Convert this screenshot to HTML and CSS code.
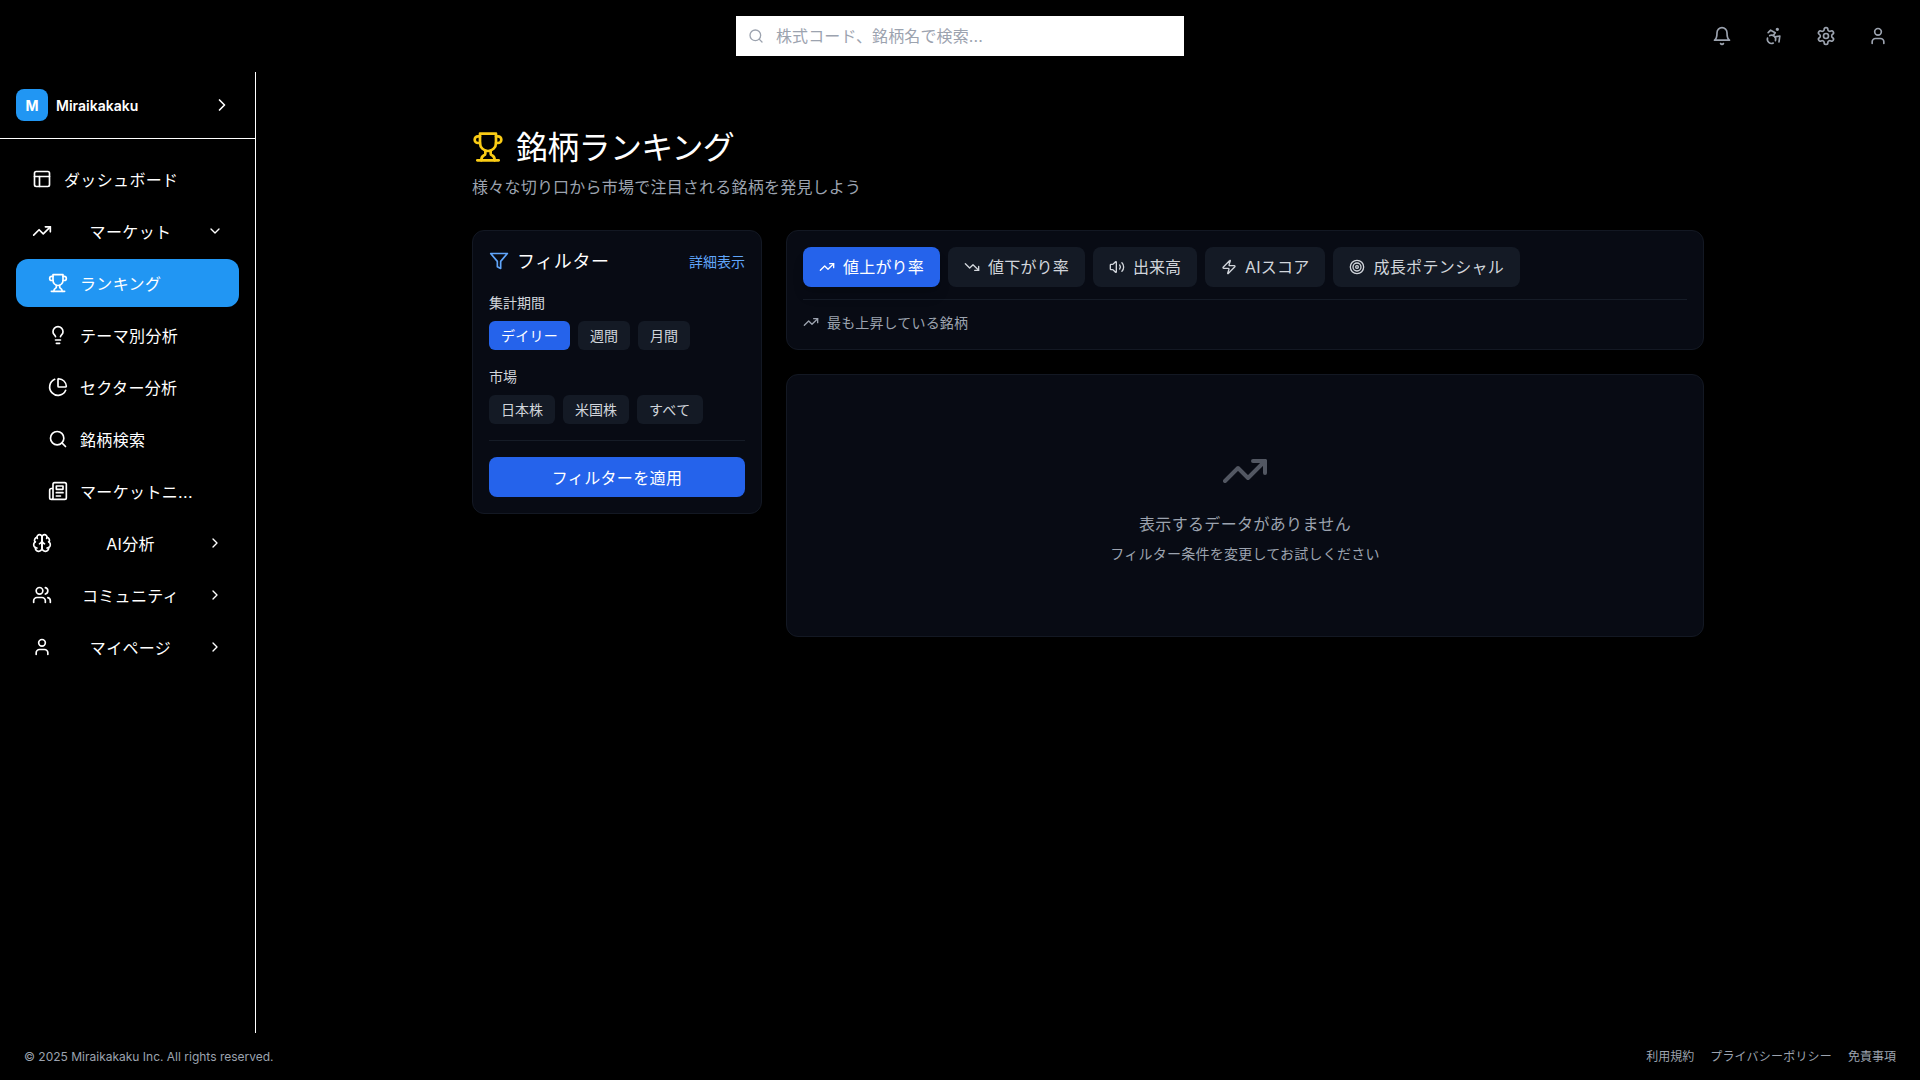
FILE: index.html
```html
<!DOCTYPE html>
<html lang="ja">
<head>
<meta charset="utf-8">
<title>銘柄ランキング | Miraikakaku</title>
<link rel="stylesheet" href="styles.css">
</head>
<body>
<svg class="sprite" aria-hidden="true">
  <symbol id="search" viewBox="0 0 24 24"><circle cx="11" cy="11" r="8"/><path d="m21 21-4.3-4.3"/></symbol>
  <symbol id="bell" viewBox="0 0 24 24"><path d="M6 8a6 6 0 0 1 12 0c0 7 3 9 3 9H3s3-2 3-9"/><path d="M10.3 21a1.94 1.94 0 0 0 3.4 0"/></symbol>
  <symbol id="accessibility" viewBox="0 0 24 24"><circle cx="16" cy="4" r="1"/><path d="m18 19 1-7-6 1"/><path d="m5 8 3-3 5.5 3-2.36 3.5"/><path d="M4.24 14.5a5 5 0 0 0 6.88 6"/><path d="M13.76 17.5a5 5 0 0 0-6.88-6"/></symbol>
  <symbol id="settings" viewBox="0 0 24 24"><path d="M12.22 2h-.44a2 2 0 0 0-2 2v.18a2 2 0 0 1-1 1.73l-.43.25a2 2 0 0 1-2 0l-.15-.08a2 2 0 0 0-2.73.73l-.22.38a2 2 0 0 0 .73 2.73l.15.1a2 2 0 0 1 1 1.72v.51a2 2 0 0 1-1 1.74l-.15.09a2 2 0 0 0-.73 2.73l.22.38a2 2 0 0 0 2.73.73l.15-.08a2 2 0 0 1 2 0l.43.25a2 2 0 0 1 1 1.73V20a2 2 0 0 0 2 2h.44a2 2 0 0 0 2-2v-.18a2 2 0 0 1 1-1.73l.43-.25a2 2 0 0 1 2 0l.15.08a2 2 0 0 0 2.73-.73l.22-.39a2 2 0 0 0-.73-2.73l-.15-.08a2 2 0 0 1-1-1.74v-.5a2 2 0 0 1 1-1.74l.15-.09a2 2 0 0 0 .73-2.73l-.22-.38a2 2 0 0 0-2.73-.73l-.15.08a2 2 0 0 1-2 0l-.43-.25a2 2 0 0 1-1-1.73V4a2 2 0 0 0-2-2z"/><circle cx="12" cy="12" r="3"/></symbol>
  <symbol id="user" viewBox="0 0 24 24"><path d="M19 21v-2a4 4 0 0 0-4-4H9a4 4 0 0 0-4 4v2"/><circle cx="12" cy="7" r="4"/></symbol>
  <symbol id="users" viewBox="0 0 24 24"><path d="M16 21v-2a4 4 0 0 0-4-4H6a4 4 0 0 0-4 4v2"/><circle cx="9" cy="7" r="4"/><path d="M22 21v-2a4 4 0 0 0-3-3.87"/><path d="M16 3.13a4 4 0 0 1 0 7.75"/></symbol>
  <symbol id="chevron-right" viewBox="0 0 24 24"><path d="m9 18 6-6-6-6"/></symbol>
  <symbol id="chevron-down" viewBox="0 0 24 24"><path d="m6 9 6 6 6-6"/></symbol>
  <symbol id="dashboard" viewBox="0 0 24 24"><rect x="3" y="3" width="18" height="18" rx="2"/><path d="M3 9h18"/><path d="M9 21V9"/></symbol>
  <symbol id="trend-up" viewBox="0 0 24 24"><path d="m22 7-8.5 8.5-5-5L2 17"/><path d="M16 7h6v6"/></symbol>
  <symbol id="trend-down" viewBox="0 0 24 24"><path d="m22 17-8.5-8.5-5 5L2 7"/><path d="M16 17h6v-6"/></symbol>
  <symbol id="trophy" viewBox="0 0 24 24"><path d="M6 9H4.5a2.5 2.5 0 0 1 0-5H6"/><path d="M18 9h1.5a2.5 2.5 0 0 0 0-5H18"/><path d="M4 22h16"/><path d="M10 14.66V17c0 .55-.47.98-.97 1.21C7.85 18.75 7 20.24 7 22"/><path d="M14 14.66V17c0 .55.47.98.97 1.21C16.15 18.75 17 20.24 17 22"/><path d="M18 2H6v7a6 6 0 0 0 12 0V2Z"/></symbol>
  <symbol id="bulb" viewBox="0 0 24 24"><path d="M15 14c.2-1 .7-1.7 1.5-2.5 1-.9 1.5-2.2 1.5-3.5A6 6 0 0 0 6 8c0 1 .2 2.2 1.5 3.5.7.7 1.3 1.5 1.5 2.5"/><path d="M9 18h6"/><path d="M10 22h4"/></symbol>
  <symbol id="pie" viewBox="0 0 24 24"><path d="M21 12c.552 0 1.005-.449.95-.998a10 10 0 0 0-8.953-8.951c-.55-.055-.998.398-.998.95v8a1 1 0 0 0 1 1z"/><path d="M21.21 15.89A10 10 0 1 1 8 2.83"/></symbol>
  <symbol id="news" viewBox="0 0 24 24"><path d="M4 22h16a2 2 0 0 0 2-2V4a2 2 0 0 0-2-2H8a2 2 0 0 0-2 2v16a2 2 0 0 1-2 2Zm0 0a2 2 0 0 1-2-2v-9c0-1.1.9-2 2-2h2"/><path d="M18 14h-8"/><path d="M15 18h-5"/><path d="M10 6h8v4h-8V6Z"/></symbol>
  <symbol id="brain" viewBox="0 0 24 24"><path d="M12 5a3 3 0 1 0-5.997.125 4 4 0 0 0-2.526 5.77 4 4 0 0 0 .556 6.588A4 4 0 1 0 12 18Z"/><path d="M12 5a3 3 0 1 1 5.997.125 4 4 0 0 1 2.526 5.77 4 4 0 0 1-.556 6.588A4 4 0 1 1 12 18Z"/><path d="M15 13a4.5 4.5 0 0 1-3-4 4.5 4.5 0 0 1-3 4"/><path d="M17.599 6.5a3 3 0 0 0 .399-1.375"/><path d="M6.003 5.125A3 3 0 0 0 6.401 6.5"/><path d="M3.477 10.896a4 4 0 0 1 .585-.396"/><path d="M19.938 10.5a4 4 0 0 1 .585.396"/><path d="M6 18a4 4 0 0 1-1.967-.516"/><path d="M19.967 17.484A4 4 0 0 1 18 18"/></symbol>
  <symbol id="filter" viewBox="0 0 24 24"><path d="M22 3H2l8 9.46V19l4 2v-8.54L22 3z"/></symbol>
  <symbol id="volume" viewBox="0 0 24 24"><path d="M11 4.702a.705.705 0 0 0-1.203-.498L6.413 7.587A1.4 1.4 0 0 1 5.416 8H3a1 1 0 0 0-1 1v6a1 1 0 0 0 1 1h2.416a1.4 1.4 0 0 1 .997.413l3.383 3.384A.705.705 0 0 0 11 19.298z"/><path d="M16 9a5 5 0 0 1 0 6"/><path d="M19.364 18.364a9 9 0 0 0 0-12.728"/></symbol>
  <symbol id="zap" viewBox="0 0 24 24"><path d="M4 14a1 1 0 0 1-.78-1.63l9.9-10.2a.5.5 0 0 1 .86.46l-1.92 6.02A1 1 0 0 0 13 10h7a1 1 0 0 1 .78 1.63l-9.9 10.2a.5.5 0 0 1-.86-.46l1.92-6.02A1 1 0 0 0 11 14z"/></symbol>
  <symbol id="target" viewBox="0 0 24 24"><circle cx="12" cy="12" r="10"/><circle cx="12" cy="12" r="6"/><circle cx="12" cy="12" r="2"/></symbol>
</svg>

<div class="app">
  <header class="topbar">
    <div class="search">
      <svg class="icon icon-sm"><use href="#search"/></svg>
      <span>株式コード、銘柄名で検索...</span>
    </div>
    <div class="top-actions">
      <svg class="icon"><use href="#bell"/></svg>
      <svg class="icon"><use href="#accessibility"/></svg>
      <svg class="icon"><use href="#settings"/></svg>
      <svg class="icon"><use href="#user"/></svg>
    </div>
  </header>

  <div class="body">
    <aside class="sidebar">
      <div class="brand">
        <div class="logo">M</div>
        <span class="brand-name">Miraikakaku</span>
        <svg class="icon"><use href="#chevron-right"/></svg>
      </div>
      <nav class="nav">
        <a class="nav-item"><svg class="icon"><use href="#dashboard"/></svg><span>ダッシュボード</span></a>
        <a class="nav-item group"><svg class="icon"><use href="#trend-up"/></svg><span>マーケット</span><svg class="icon icon-sm"><use href="#chevron-down"/></svg></a>
        <a class="nav-item sub active"><svg class="icon"><use href="#trophy"/></svg><span>ランキング</span></a>
        <a class="nav-item sub"><svg class="icon"><use href="#bulb"/></svg><span>テーマ別分析</span></a>
        <a class="nav-item sub"><svg class="icon"><use href="#pie"/></svg><span>セクター分析</span></a>
        <a class="nav-item sub"><svg class="icon"><use href="#search"/></svg><span>銘柄検索</span></a>
        <a class="nav-item sub"><svg class="icon"><use href="#news"/></svg><span>マーケットニ...</span></a>
        <a class="nav-item group"><svg class="icon"><use href="#brain"/></svg><span>AI分析</span><svg class="icon icon-sm"><use href="#chevron-right"/></svg></a>
        <a class="nav-item group"><svg class="icon"><use href="#users"/></svg><span>コミュニティ</span><svg class="icon icon-sm"><use href="#chevron-right"/></svg></a>
        <a class="nav-item group"><svg class="icon"><use href="#user"/></svg><span>マイページ</span><svg class="icon icon-sm"><use href="#chevron-right"/></svg></a>
      </nav>
    </aside>

    <main class="main">
      <h1 class="title"><svg class="icon icon-lg"><use href="#trophy"/></svg><span>銘柄ランキング</span></h1>
      <p class="subtitle">様々な切り口から市場で注目される銘柄を発見しよう</p>

      <div class="grid">
        <section class="card filters">
          <div class="filters-head">
            <h2><svg class="icon"><use href="#filter"/></svg><span>フィルター</span></h2>
            <a class="link">詳細表示</a>
          </div>
          <div class="field">
            <div class="label">集計期間</div>
            <div class="chips"><button class="chip on">デイリー</button><button class="chip">週間</button><button class="chip">月間</button></div>
          </div>
          <div class="field">
            <div class="label">市場</div>
            <div class="chips"><button class="chip">日本株</button><button class="chip">米国株</button><button class="chip kana">すべて</button></div>
          </div>
          <div class="apply-row"><button class="apply">フィルターを適用</button></div>
        </section>

        <div class="results">
          <section class="card tabs-card">
            <div class="tabs">
              <button class="tab on"><svg class="icon icon-sm"><use href="#trend-up"/></svg>値上がり率</button>
              <button class="tab"><svg class="icon icon-sm"><use href="#trend-down"/></svg>値下がり率</button>
              <button class="tab kanji"><svg class="icon icon-sm"><use href="#volume"/></svg>出来高</button>
              <button class="tab"><svg class="icon icon-sm"><use href="#zap"/></svg>AIスコア</button>
              <button class="tab kana"><svg class="icon icon-sm"><use href="#target"/></svg>成長ポテンシャル</button>
            </div>
            <div class="tab-note"><svg class="icon icon-sm"><use href="#trend-up"/></svg><span>最も上昇している銘柄</span></div>
          </section>
          <section class="card empty">
            <svg class="icon icon-xl"><use href="#trend-up"/></svg>
            <p class="empty-title">表示するデータがありません</p>
            <p class="empty-text">フィルター条件を変更してお試しください</p>
          </section>
        </div>
      </div>
    </main>
  </div>

  <footer class="footer">
    <span>© 2025 Miraikakaku Inc. All rights reserved.</span>
    <div class="footer-links"><a>利用規約</a><a class="kana">プライバシーポリシー</a><a>免責事項</a></div>
  </footer>
</div>
</body>
</html>
```
FILE: styles.css
```css
* { box-sizing: border-box; margin: 0; padding: 0; }
body { background: #000; color: #fff; font-family: Inter, "Noto Sans CJK JP", sans-serif; font-size: 16px; line-height: 24px; }
button { font: inherit; color: inherit; border: 0; }
.sprite { position: absolute; width: 0; height: 0; }
.icon { width: 20px; height: 20px; flex: none; fill: none; stroke: currentColor; stroke-width: 2; stroke-linecap: round; stroke-linejoin: round; }
.icon-sm { width: 16px; height: 16px; }
.icon-lg { width: 32px; height: 32px; }
.icon-xl { width: 48px; height: 48px; }

.app { height: 1080px; display: flex; flex-direction: column; overflow: hidden; }

.topbar { height: 72px; flex: none; display: grid; grid-template-columns: 1fr 448px 1fr; align-items: center; padding: 0 32px; color: #9ca3af; }
.search { grid-column: 2; height: 40px; background: #fff; display: flex; align-items: center; gap: 12px; padding: 0 12px; letter-spacing: 0.12px; }
.top-actions { display: flex; justify-content: flex-end; align-items: center; gap: 32px; }

.body { flex: 1; display: flex; min-height: 0; }
.sidebar { width: 256px; flex: none; border-right: 1px solid #fff; }
.brand { height: 67px; display: flex; align-items: center; padding: 0 23px 0 16px; border-bottom: 1px solid #fff; }
.logo { width: 32px; height: 32px; border-radius: 8px; background: #2196f3; display: flex; align-items: center; justify-content: center; font-size: 14px; font-weight: 700; margin-right: 8px; padding-top: 1px; }
.brand-name { font-size: 14px; font-weight: 600; flex: 1; padding-top: 1px; }
.nav { padding: 16px; display: flex; flex-direction: column; gap: 4px; letter-spacing: 0.35px; }
.nav-item { height: 48px; border-radius: 12px; display: flex; align-items: center; gap: 12px; padding: 0 16px; }
.nav-item span { white-space: nowrap; padding-top: 1px; }
.nav-item.group span { flex: 1; text-align: center; padding-left: 2px; }
.nav-item.sub { padding-left: 32px; }
.nav-item.active { background: #2196f3; }

.main { width: 1280px; margin: 0 auto; padding: 56px 24px 0; }
.title { display: flex; align-items: center; gap: 12px; height: 40px; font-size: 32px; line-height: 40px; font-weight: 400; letter-spacing: -0.7px; }
.title .icon { color: #facc15; margin-top: -2px; }
.subtitle { color: #9ca3af; margin-top: 7px; letter-spacing: 0.22px; }
.grid { display: grid; grid-template-columns: 290px 1fr; gap: 24px; align-items: start; margin-top: 31px; }
.card { background: #080b14; border: 1px solid #131823; border-radius: 12px; padding: 16px; }

.filters { height: 284px; }
.filters-head { display: flex; align-items: center; justify-content: space-between; height: 28px; margin-bottom: 18px; }
.filters-head h2 { display: flex; align-items: center; gap: 8px; font-size: 18px; font-weight: 400; letter-spacing: 0.6px; }
.filters-head span, .link { padding-top: 2px; }
.filters-head .icon, .link { color: #60a5fa; }
.link { font-size: 14px; }
.field { margin-bottom: 17px; }
.field + .field { margin-bottom: 16px; }
.label { font-size: 14px; line-height: 20px; color: #d1d5db; margin-bottom: 8px; }
.chips { display: flex; gap: 8px; }
.chip { height: 29px; padding: 1px 12px 0; border-radius: 6px; background: #141a25; color: #d1d5db; font-size: 14px; line-height: 28px; }
.chip.on { letter-spacing: 0.25px; }
.chip.on, .tab.on { background: #2563eb; color: #fff; }
.apply-row { border-top: 1px solid #161c27; padding-top: 16px; }
.apply { width: 100%; height: 40px; border-radius: 8px; background: #2563eb; letter-spacing: 0.35px; padding-top: 1px; }

.results { display: flex; flex-direction: column; gap: 24px; }
.tabs-card { height: 120px; }
.tabs { display: flex; gap: 8px; }
.tab { height: 40px; padding: 0 16px; border-radius: 8px; background: #141a25; color: #d1d5db; display: flex; align-items: center; gap: 8px; letter-spacing: 0.2px; }
.tab.kanji { letter-spacing: 0; }
.kana { letter-spacing: 0.35px; }
.footer-links .kana { letter-spacing: 0.2px; }
.tab.on { box-shadow: 0 10px 15px -3px rgba(0, 0, 0, .1), 0 4px 6px -4px rgba(0, 0, 0, .1); }
.tab-note { margin-top: 12px; border-top: 1px solid #161c27; padding-top: 11px; display: flex; align-items: center; gap: 8px; color: #9ca3af; font-size: 14px; letter-spacing: 0.15px; }
.tab-note .icon { margin-top: -2px; }
.empty { height: 263px; display: flex; flex-direction: column; align-items: center; padding-top: 72px; color: #9ca3af; }
.empty .icon { opacity: .5; margin-bottom: 17px; }
.empty-title { margin-bottom: 8px; letter-spacing: 0.35px; }
.empty-text { font-size: 14px; line-height: 20px; letter-spacing: 0.25px; }

.footer { height: 47px; flex: none; display: flex; align-items: center; justify-content: space-between; padding: 0 24px; font-size: 12px; color: #9ca3af; }
.footer-links { display: flex; gap: 16px; padding-top: 1px; }
```
